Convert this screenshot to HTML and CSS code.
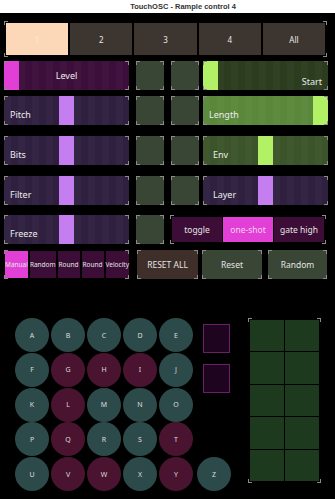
FILE: index.html
```html
<!DOCTYPE html>
<html lang="en">
<head>
    <meta charset="UTF-8">
    <meta name="viewport" content="width=device-width, initial-scale=1.0">
    <title>TouchOSC - Rample control 4</title>
    <link rel="stylesheet" href="styles.css">
</head>
<body>
    <div class="titlebar">TouchOSC - Rample control 4</div>

    <div class="panel">
        <!-- Kanal-Auswahl -->
        <div class="tabs frame">
            <div class="tab on">1</div>
            <div class="tab">2</div>
            <div class="tab">3</div>
            <div class="tab">4</div>
            <div class="tab">All</div>
        </div>

        <div class="row r1">
            <div class="slider frame level" style="--v:0"><div class="handle"></div><span class="label center">Level</span></div>
            <div class="pad frame"></div>
            <div class="pad frame"></div>
            <div class="slider frame start right-col" style="--v:0"><div class="handle"></div><span class="label br">Start</span></div>
        </div>

        <div class="row r2">
            <div class="slider frame lilac" style="--v:.5"><div class="handle"></div><span class="label bl">Pitch</span></div>
            <div class="pad frame"></div>
            <div class="pad frame"></div>
            <div class="slider frame length right-col" style="--v:1"><div class="handle"></div><span class="label bl">Length</span></div>
        </div>

        <div class="row r3">
            <div class="slider frame lilac" style="--v:.5"><div class="handle"></div><span class="label bl">Bits</span></div>
            <div class="pad frame"></div>
            <div class="pad frame"></div>
            <div class="slider frame env right-col" style="--v:.5"><div class="handle"></div><span class="label bl wide">Env</span></div>
        </div>

        <div class="row r4">
            <div class="slider frame lilac" style="--v:.5"><div class="handle"></div><span class="label bl">Filter</span></div>
            <div class="pad frame"></div>
            <div class="pad frame"></div>
            <div class="slider frame lilac right-col" style="--v:.5"><div class="handle"></div><span class="label bl wide">Layer</span></div>
        </div>

        <div class="row r5">
            <div class="slider frame lilac" style="--v:.5"><div class="handle"></div><span class="label bl">Freeze</span></div>
            <div class="pad frame"></div>
            <div class="radio frame">
                <div class="opt">toggle</div>
                <div class="opt on">one-shot</div>
                <div class="opt">gate high</div>
            </div>
        </div>

        <div class="row r6">
            <div class="modes frame">
                <div class="mode on">Manual</div>
                <div class="mode">Random</div>
                <div class="mode">Round</div>
                <div class="mode">Round</div>
                <div class="mode">Velocity</div>
            </div>
            <div class="btn frame reset-all">RESET ALL</div>
            <div class="btn frame reset">Reset</div>
            <div class="btn frame random">Random</div>
        </div>

        <div class="bottom">
            <div class="keys">
                <div class="key">A</div><div class="key">B</div><div class="key">C</div><div class="key">D</div><div class="key">E</div>
                <div class="key">F</div><div class="key red">G</div><div class="key red">H</div><div class="key red">I</div><div class="key">J</div>
                <div class="key">K</div><div class="key red">L</div><div class="key">M</div><div class="key">N</div><div class="key">O</div>
                <div class="key">P</div><div class="key red">Q</div><div class="key">R</div><div class="key">S</div><div class="key red">T</div>
                <div class="key">U</div><div class="key red">V</div><div class="key red">W</div><div class="key">X</div><div class="key red">Y</div>
            </div>
            <div class="side">
                <div class="led"></div>
                <div class="led"></div>
                <div class="key z">Z</div>
            </div>
            <div class="matrix frame">
                <div class="cell"></div><div class="cell"></div>
                <div class="cell"></div><div class="cell"></div>
                <div class="cell"></div><div class="cell"></div>
                <div class="cell"></div><div class="cell"></div>
                <div class="cell"></div><div class="cell"></div>
            </div>
        </div>
    </div>
</body>
</html>
```

FILE: styles.css
```css
body {
    margin: 0;
    padding: 0;
    width: 335px;
    height: 499px;
    background-color: #000;
    color: #e4e4e4;
    font-family: 'Noto Sans', 'DejaVu Sans', sans-serif;
    overflow: hidden;
}

.titlebar {
    height: 13px;
    line-height: 13px;
    background-color: #fff;
    color: #333;
    font-family: 'Liberation Sans', Arial, sans-serif;
    font-weight: bold;
    font-size: 7.5px;
    text-align: center;
    padding-left: 31px;
}

.panel {
    padding-top: 8px;
}

/* Eckwinkel wie bei TouchOSC */
.frame {
    position: relative;
    --c: #8c8c84;
}

.frame::after {
    content: '';
    position: absolute;
    inset: 0;
    pointer-events: none;
    background:
        linear-gradient(var(--c), var(--c)) left top / 4px 1px no-repeat,
        linear-gradient(var(--c), var(--c)) left top / 1px 4px no-repeat,
        linear-gradient(var(--c), var(--c)) right top / 4px 1px no-repeat,
        linear-gradient(var(--c), var(--c)) right top / 1px 4px no-repeat,
        linear-gradient(var(--c), var(--c)) left bottom / 4px 1px no-repeat,
        linear-gradient(var(--c), var(--c)) left bottom / 1px 4px no-repeat,
        linear-gradient(var(--c), var(--c)) right bottom / 4px 1px no-repeat,
        linear-gradient(var(--c), var(--c)) right bottom / 1px 4px no-repeat;
}

.tabs {
    display: flex;
    gap: 2px;
    margin-left: 4px;
    width: 319px;
    height: 32px;
    padding: 2px;
}

.tab {
    flex: 1;
    display: flex;
    align-items: center;
    justify-content: center;
    background-color: #3d3530;
    font-size: 8px;
    color: #e8e8e8;
}

.tab.on {
    background-color: #fcd8b8;
    color: #f6ebe0;
}

.row {
    display: flex;
    height: 29px;
    margin-left: 4px;
}

.r1 { margin-top: 4px; }
.r2 { margin-top: 6px; }
.r3 { margin-top: 11px; }
.r4 { margin-top: 11px; }
.r5 { margin-top: 10px; }
.r6 { margin-top: 6px; height: 29px; }

.slider {
    width: 125px;
    height: 100%;
    background-color: #2f2040;
    background-image: repeating-linear-gradient(90deg, rgba(255, 255, 255, 0.025) 0 7px, transparent 7px 14px);
}

.slider .handle {
    position: absolute;
    top: 0;
    bottom: 0;
    width: 15px;
    left: calc(var(--v) * (100% - 15px));
    background-color: #c47ef0;
}

.slider .label {
    position: absolute;
    font-size: 9px;
    color: #ececec;
}

.label.center {
    top: 0;
    bottom: 0;
    left: 0;
    right: 0;
    display: flex;
    align-items: center;
    justify-content: center;
}

.label.bl {
    left: 6px;
    bottom: 4px;
}

.label.bl.wide {
    left: 10px;
}

.label.br {
    right: 6px;
    bottom: 2px;
}

.level {
    background-color: #3c0e3b;
}

.level .handle {
    background-color: #e23fd6;
}

.start {
    background-color: #2b3d1e;
}

.length {
    background-color: #5a883b;
}

.env {
    background-color: #3c5429;
}

.start .handle,
.length .handle,
.env .handle {
    background-color: #b2f166;
}

.right-col {
    margin-left: 4px;
}

.pad {
    width: 28px;
    height: 100%;
    margin-left: 7px;
    background-color: #394535;
}

.radio {
    display: flex;
    gap: 1px;
    width: 152px;
    margin-left: 6px;
    padding: 2px;
    height: 25px;
}

.opt {
    flex: 1;
    display: flex;
    align-items: center;
    justify-content: center;
    background-color: #3c0d37;
    font-size: 8.5px;
}

.opt.on {
    background-color: #e23fd6;
    color: #fbd0f5;
}

.modes {
    display: flex;
    gap: 2px;
    width: 124px;
    padding: 1px 0 1px 1px;
    height: 27px;
}

.mode {
    flex: 1;
    display: flex;
    align-items: center;
    justify-content: center;
    background-color: #3c0d37;
    font-size: 6.5px;
    white-space: nowrap;
}

.mode.on {
    background-color: #e23fd6;
}

.btn {
    display: flex;
    align-items: center;
    justify-content: center;
    height: 100%;
    font-size: 8.5px;
    background-color: #394535;
}

.reset-all {
    width: 61px;
    margin-left: 8px;
    background-color: #3e2f2a;
}

.reset {
    width: 60px;
    margin-left: 4px;
}

.random {
    width: 59px;
    margin-left: 6px;
}

.bottom {
    display: flex;
    margin-top: 39px;
    margin-left: 15px;
}

.keys {
    display: grid;
    grid-template-columns: repeat(5, 34px);
    grid-auto-rows: 34px;
    column-gap: 2px;
    row-gap: 0.75px;
}

.key {
    width: 34px;
    height: 34px;
    border-radius: 50%;
    background-color: #2d4a4b;
    display: flex;
    align-items: center;
    justify-content: center;
    font-size: 7px;
    color: #dcdcdc;
}

.key.red {
    background-color: #4a1430;
}

.side {
    display: flex;
    flex-direction: column;
    width: 34px;
    margin-left: 4px;
}

.led {
    width: 25px;
    height: 27px;
    margin-left: 6px;
    margin-top: 6px;
    background-color: #1f0420;
    border: 1px solid #6a2066;
}

.led + .led {
    margin-top: 11px;
}

.key.z {
    margin-top: auto;
}

.matrix {
    display: grid;
    grid-template-columns: repeat(2, 1fr);
    grid-template-rows: repeat(5, 1fr);
    gap: 1px;
    width: 69px;
    height: 161px;
    padding: 2px;
    margin-left: 17px;
}

.cell {
    background-color: #1d3a1e;
}
```
